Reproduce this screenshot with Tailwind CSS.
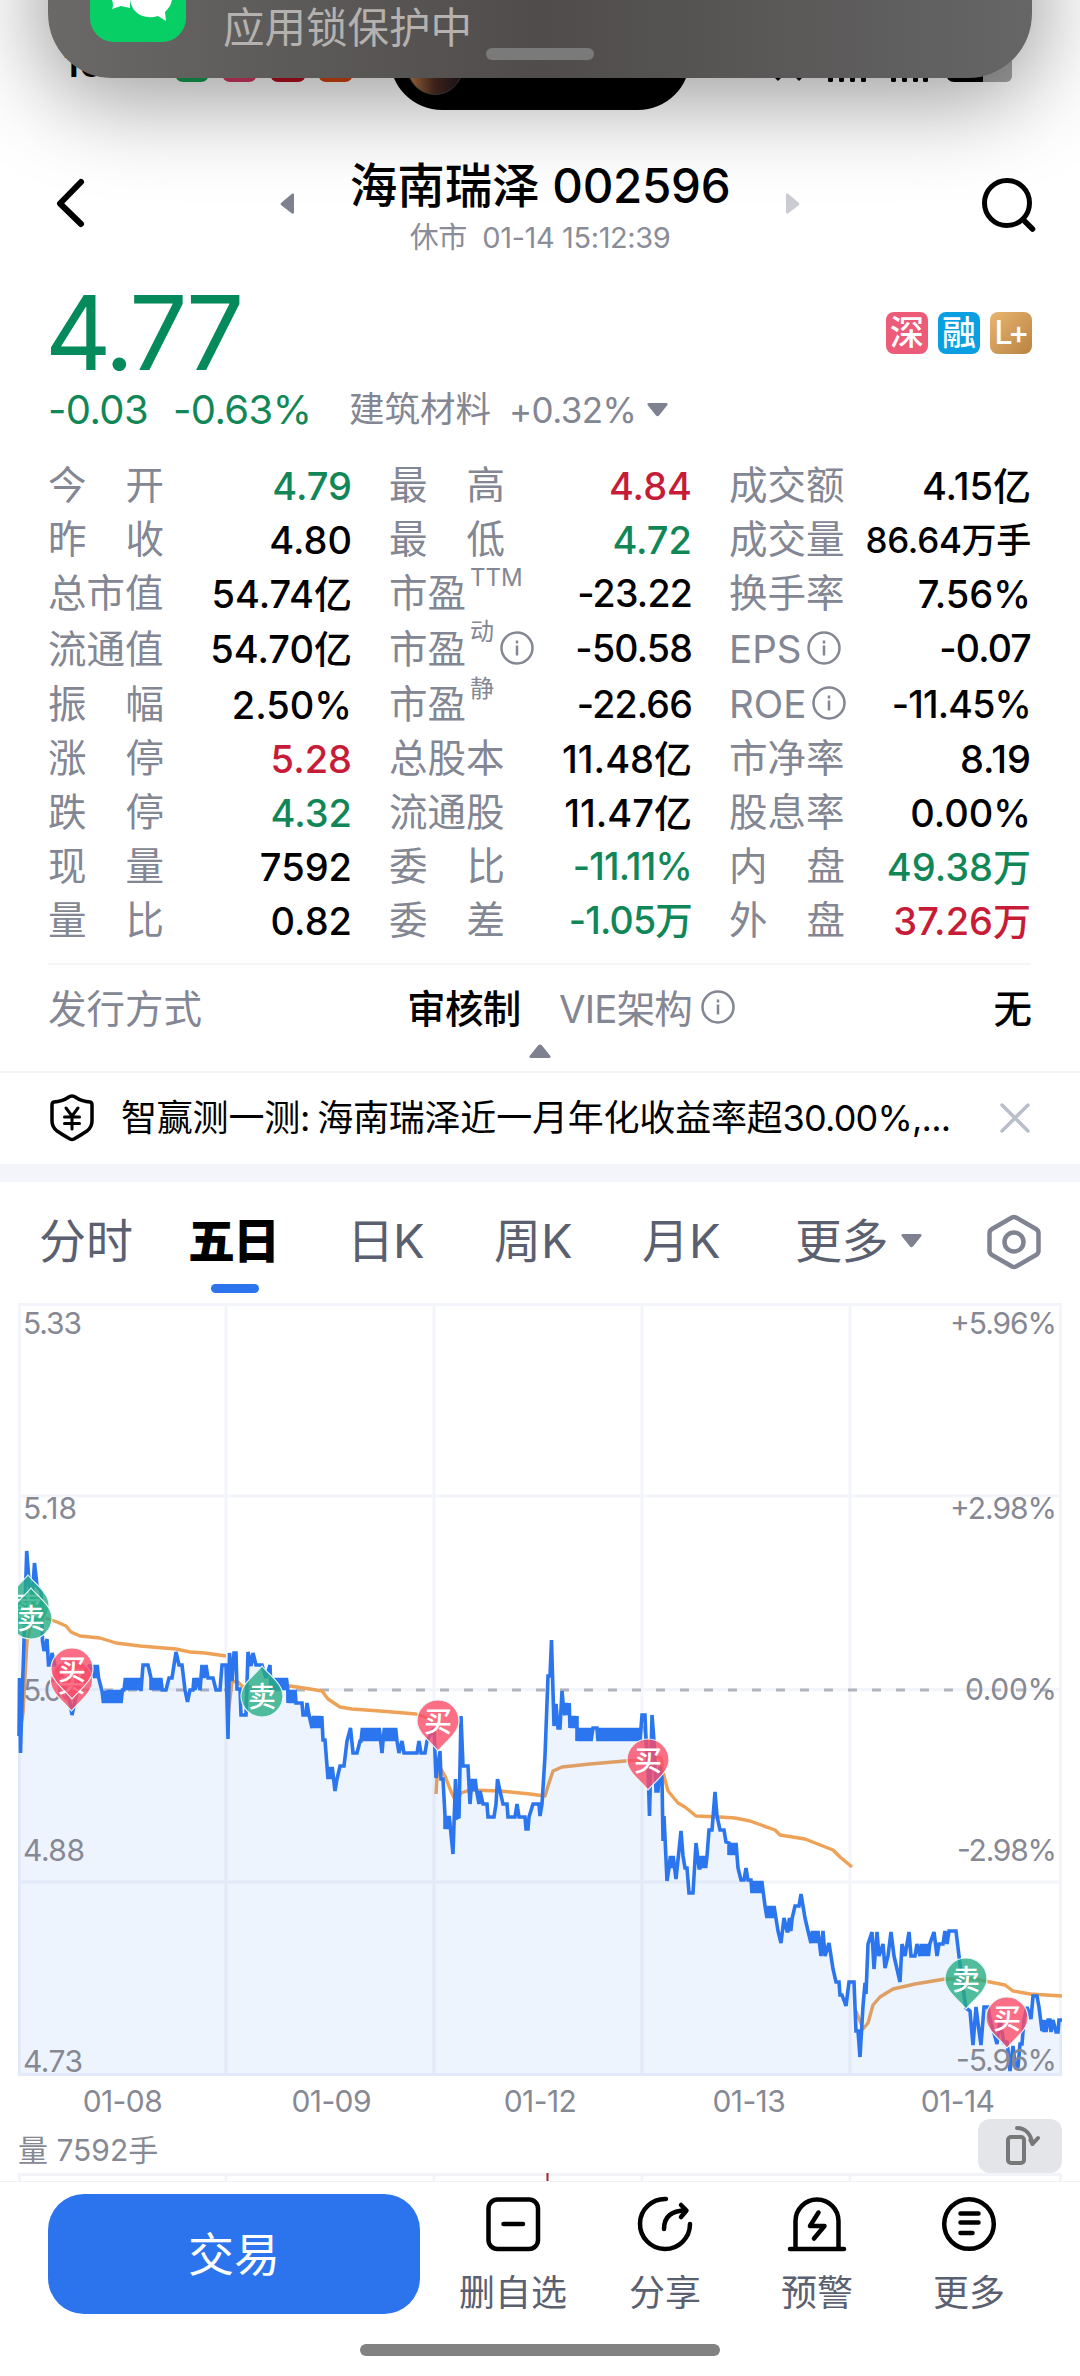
<!DOCTYPE html>
<html lang="zh-CN">

<head>
    <meta charset="UTF-8">
    <meta name="viewport" content="width=device-width, initial-scale=1.0">
    <title>海南瑞泽 002596</title>
    <script src="https://cdn.jsdelivr.net/npm/@tailwindcss/browser@4"></script>
</head>

<body class="bg-white">
    <div class="relative w-[1080px] h-[2376px] overflow-hidden bg-white flex flex-col font-['Inter','Noto_Sans_CJK_SC',sans-serif] text-black">

        <!-- Status bar -->
        <div class="h-[140px] shrink-0 flex items-start">
            <svg class="w-[1080px] h-[112px]" viewBox="0 0 1080 112">
                <text x="63" y="77" font-size="38" font-weight="600">16:20</text>
                <rect x="175" y="48" width="34" height="34" rx="8" fill="#14a150" />
                <rect x="222" y="48" width="35" height="34" rx="8" fill="#d33a66" />
                <rect x="270" y="48" width="36" height="34" rx="8" fill="#b30f1f" />
                <rect x="318" y="48" width="35" height="34" rx="8" fill="#d3460f" />
                <path d="M774 77h8l-4 4zM795 77h8l-4 4z" />
                <path d="M828 60h5v20.500a1.500 1.500 0 0 1-1.500 1.500h-2a1.500 1.500 0 0 1-1.500-1.500zM839 60h5v20.500a1.500 1.500 0 0 1-1.500 1.500h-2a1.500 1.500 0 0 1-1.500-1.500zM850 60h5v20.500a1.500 1.500 0 0 1-1.500 1.500h-2a1.500 1.500 0 0 1-1.500-1.500zM861 60h5v20.500a1.500 1.500 0 0 1-1.500 1.500h-2a1.500 1.500 0 0 1-1.500-1.500zM891 60h5v20.500a1.500 1.500 0 0 1-1.500 1.500h-2a1.500 1.500 0 0 1-1.500-1.500zM902 60h5v20.500a1.500 1.500 0 0 1-1.500 1.500h-2a1.500 1.500 0 0 1-1.500-1.500zM913 60h5v20.500a1.500 1.500 0 0 1-1.500 1.500h-2a1.500 1.500 0 0 1-1.500-1.500zM923 60h5v20.500a1.500 1.500 0 0 1-1.500 1.500h-2a1.500 1.500 0 0 1-1.500-1.500z" />
                <path d="M983 54h29v22a6 6 0 0 1-6 6h-23z" fill="#a5a5a5" />
                <path d="M946 54h37v28h-29a8 8 0 0 1-8-8z" />
            </svg>
        </div>

        <!-- Title bar -->
        <header class="h-[132px] shrink-0 flex items-center pl-[54px] pr-[42px]">
            <svg class="w-[34px] h-[52px] mt-[-4px]" viewBox="0 0 34 52" fill="none" stroke="#000" stroke-width="6" stroke-linecap="round" stroke-linejoin="round"><path d="M27 4L6 25.500L27 46" /></svg>
            <svg class="ml-[191px] w-[16px] h-[22px] mt-[-4px]" viewBox="0 0 16 22"><path d="M15 1.500v18c0 1-1 1.500-2 1L2 12q-1-1 0-2L13 .8c1-.8 2-.3 2 .7z" fill="#7e8290" /></svg>
            <div class="flex-1 flex flex-col items-center pt-[3px]">
                <h1 class="text-[47.500px] leading-[58px] font-medium whitespace-nowrap">海南瑞泽 <span class="tracking-[-0.3px]">002596</span></h1>
                <p class="mt-[3px] text-[29px] leading-[40px] text-[#8a8d98] whitespace-nowrap tracking-[-0.4px]">休市 &nbsp;01-14 15:12:39</p>
            </div>
            <svg class="mr-[180px] w-[16px] h-[22px] mt-[-4px]" viewBox="0 0 16 22"><path d="M1 1.500v18c0 1 1 1.500 2 1L14 12q1-1 0-2L3 .8C2 0 1 .5 1 1.500z" fill="#cbccd3" /></svg>
            <svg class="w-[57px] h-[56px] mt-[-2px]" viewBox="0 0 57 56" fill="none" stroke="#000" stroke-width="5"><circle cx="26" cy="26" r="22.500" /><path d="M42 42.500L51.500 52" stroke-width="5.500" stroke-linecap="round" /></svg>
        </header>

        <!-- Price -->
        <section class="h-[187px] shrink-0 px-[49px] pt-[11px]">
            <div class="flex justify-between items-center h-[100px]">
                <span class="ml-[-4px] text-[103px] leading-[100px] text-[#058a5c] tracking-[-3.5px]">4.77</span>
                <div class="flex gap-[10px] text-white mr-[-1px]">
                    <span class="w-[42px] h-[42px] rounded-lg bg-[#ec5b78] flex items-center justify-center text-[34px] leading-none font-medium">深</span>
                    <span class="w-[42px] h-[42px] rounded-lg bg-[#099fe0] flex items-center justify-center text-[34px] leading-none font-medium">融</span>
                    <span class="w-[42px] h-[42px] rounded-lg bg-gradient-to-br from-[#e9b66f] to-[#b98242] flex items-center justify-center text-[32px] leading-none font-medium tracking-[-2px]">L+</span>
                </div>
            </div>
            <div class="flex items-center h-[54px] whitespace-nowrap">
                <span class="w-[125px] ml-[-1px] text-[40px] text-[#118757] tracking-[-0.6px]">-0.03</span>
                <span class="w-[176px] text-[40px] text-[#118757] tracking-[-0.6px]">-0.63%</span>
                <span class="w-[160px] text-[35.500px] text-[#838693]">建筑材料</span>
                <span class="w-[138px] text-[35px] text-[#838693] tracking-[-0.6px]">+0.32%</span>
                <svg class="w-[21px] h-[14px]" viewBox="0 0 21 14"><path d="M2 0h17c2 0 2 1.500 1 2.500l-8 10q-1.500 1.500-3 0L1 2.500C0 1.500 0 0 2 0z" fill="#7e8290" /></svg>
            </div>
        </section>

        <!-- Quote table, filled by the script below -->
        <section id="quotes" class="shrink-0 ml-[48px] mr-[49px] grid grid-cols-[304px_303px_302px] gap-x-[37px] grid-rows-[54px_54px_54px_57px_54px_54px_54px_54px_54px] h-[506px] border-b-2 border-[#f5f5f7]"></section>

        <section class="shrink-0 h-[106px] mx-[48px] pt-[17px] flex flex-col items-center">
            <div class="w-full h-[56px] flex items-center text-[38.500px] whitespace-nowrap">
                <span class="w-[359px] text-[#838693]">发行方式</span>
                <span class="w-[152px] font-medium tracking-[-0.6px]">审核制</span>
                <span class="text-[#838693] tracking-[-0.8px]">VIE架构</span>
                <svg class="ml-[9px] mb-[6px] w-[34px] h-[34px]" viewBox="0 0 34 34" fill="none" stroke="#838693" stroke-width="2.500"><circle cx="17" cy="17" r="15.500" /><path d="M17 14.500v10M17 9.500v3" /></svg>
                <span class="ml-auto font-medium">无</span>
            </div>
            <svg class="mt-[6px] w-[22px] h-[14px]" viewBox="0 0 22 14"><path d="M2 14h18c2 0 2-1.500 1-2.500l-8-10q-2-2-4 0l-8 10C0 12.500 0 14 2 14z" fill="#7e8290" /></svg>
        </section>

        <!-- Tip -->
        <section class="shrink-0 h-[93px] border-t-2 border-[#f2f3f5] flex items-center pl-[49px] pr-[49px] pb-[2px]">
            <svg class="w-[46px] h-[50px]" viewBox="0 0 46 50" fill="none" stroke="#000" stroke-width="3.500" stroke-linejoin="round" stroke-linecap="round">
                <path d="M23 3q2 0 4 1.500q6 4 14 4.500q2 .5 2 3v16q0 6-5 10q-6 4-13 8q-2 1-4 0q-7-4-13-8q-5-4-5-10V12q0-2.500 2-3q8-.5 14-4.500Q21 3 23 3z" />
                <path d="M17 15l6 8l6-8M23 23v13M15.500 24h15M15.500 30.500h15" stroke-width="3" />
            </svg>
            <p class="ml-[26px] text-[36px] whitespace-nowrap tracking-[-0.2px]">智赢测一测:<span class="ml-[7px]">海南瑞泽近一月年化收益率超</span><span class="tracking-[-0.8px]">30.00%,...</span></p>
            <svg class="ml-auto w-[32px] h-[32px]" viewBox="0 0 32 32" stroke="#b9bfca" stroke-width="3.500" stroke-linecap="round"><path d="M3 3L29 29M29 3L3 29" /></svg>
        </section>
        <div class="shrink-0 h-[18px] bg-[#f4f5fa]"></div>

        <!-- Chart tabs -->
        <nav class="shrink-0 h-[114px] pl-[39px] pt-[30px] flex items-start text-[47px] leading-[58px] text-[#5b6070] whitespace-nowrap">
            <a class="w-[149px]">分时</a>
            <a class="w-[159px] flex flex-col text-black font-black tracking-[-2px]">五日<span class="mt-[14px] ml-[23px] w-[48px] h-[9px] rounded-full bg-[#2b74ee]"></span></a>
            <a class="w-[147px] tracking-[-1px]">日K</a>
            <a class="w-[148px]">周K</a>
            <a class="w-[153px]">月K</a>
            <a class="w-[191px] flex items-center tracking-[-0.5px]">更多<svg class="ml-[13px] w-[21px] h-[14px]" viewBox="0 0 21 14"><path d="M2 0h17c2 0 2 1.500 1 2.500l-8 10q-1.500 1.500-3 0L1 2.500C0 1.500 0 0 2 0z" fill="#7e8290" /></svg></a>
            <svg class="mt-[2px] w-[56px] h-[56px]" viewBox="0 0 56 56" fill="none" stroke="#808492" stroke-width="4.500" stroke-linejoin="round"><path d="M26 3.500q2-1 4 0l20 11.500q2.500 1.500 2.500 4v18q0 2.500-2.500 4l-20 11.500q-2 1-4 0L6 41q-2.500-1.500-2.500-4V19Q3.500 16.500 6 15z" /><circle cx="28" cy="28" r="9.500" /></svg>
        </nav>

        <!-- Five day chart -->
        <svg class="shrink-0 w-[1080px] h-[780px]" viewBox="0 1295 1080 780">
            <g stroke="#f3f5fa" stroke-width="3" fill="none">
                <path d="M18 1303.500H1062M18 1495H1062M18 1688.500H1062M18 1881H1062M18 2073.500H1062" />
                <path d="M19.500 1302V2075M226 1302V2075M434 1302V2075M642 1302V2075M850 1302V2075M1060.500 1302V2075" />
            </g>
            <path d="M80 1689H1055" stroke="#b1b4bd" stroke-width="3" stroke-dasharray="9 15" />
            <g fill="none" stroke="#eea257" stroke-width="3.400" stroke-linejoin="round">
                <polyline points="19,1735 23,1712 27,1640 30,1628 36,1619 46,1617 57,1621 66,1625 71,1631 80,1635 100,1637 116,1642 140,1645 176,1648 190,1651 205,1652 226,1655" />
                <polyline points="228,1715 232,1680 238,1681 243,1686 290,1685 310,1688 322,1690 328,1698 340,1706 352,1708 380,1710 416,1713 431,1718" />
                <polyline points="436,1793 437,1777 441,1768 445,1775 450,1788 454,1797 457,1800 461,1792 470,1789 500,1790 530,1793 545,1795 548,1785 553,1770 562,1766 590,1763 625,1760 642,1759" />
                <polyline points="644,1725 650,1755 661,1757 664,1775 668,1790 678,1802 685,1806 696,1815 720,1816 735,1817 750,1820 775,1829 780,1834 805,1838 833,1849 840,1856 852,1866" />
                <polyline points="856,2010 863,2028 868,2022 873,2004 880,1996 893,1988 915,1983 945,1978 975,1978 1005,1984 1013,1990 1030,1993 1062,1995" />
            </g>
            <polygon id="area" fill="#2b80f4" fill-opacity="0.085" />
            <polyline id="line" fill="none" stroke="#2b76ee" stroke-width="3.600" stroke-linejoin="miter" stroke-miterlimit="2" />
            <g font-size="30" fill="#868994">
                <text x="23" y="1333" textLength="59">5.33</text>
                <text x="23" y="1518" textLength="54">5.18</text>
                <text x="23" y="1700" textLength="56">5.03</text>
                <text x="23" y="1860" textLength="62">4.88</text>
                <text x="23" y="2071" textLength="60">4.73</text>
                <text x="950" y="1333" textLength="107">+5.96%</text>
                <text x="950" y="1518" textLength="107">+2.98%</text>
                <text x="965" y="1699" textLength="92">0.00%</text>
                <text x="957" y="1860" textLength="100">-2.98%</text>
                <text x="956" y="2070" textLength="101">-5.96%</text>
            </g>
            <clipPath id="plot"><rect x="18" y="1302" width="1044" height="774" /></clipPath>
            <g id="pins" clip-path="url(#plot)" font-size="28" font-weight="500" fill="#fff" text-anchor="middle"></g>
        </svg>

        <div class="shrink-0 h-[51px] mx-[18px] grid grid-cols-5 items-center text-[30px] text-[#868994] text-center tracking-[-0.6px]">
            <span>01-08</span><span>01-09</span><span>01-12</span><span>01-13</span><span>01-14</span>
        </div>

        <div class="shrink-0 h-[46px] mx-[18px] flex items-center justify-between text-[30px] text-[#868994]">
            <span>量 7592手</span>
            <span class="w-[84px] h-[54px] mt-[-8px] rounded-xl bg-[#e4e5e9] flex items-center justify-center">
                <svg class="w-[40px] h-[42px]" viewBox="0 0 40 42" fill="none" stroke="#777" stroke-width="4" stroke-linecap="round" stroke-linejoin="round"><rect x="8" y="12" width="16" height="26" rx="3" /><path d="M17 3C26 3 31 10 32.500 19M32.500 19L38 13M32.500 19L30.500 15" /></svg>
            </span>
        </div>
        <svg class="shrink-0 w-[1080px] h-[9px]" viewBox="0 2172 1080 9">
            <path d="M18 2173.500H1062M19.500 2172V2181M226 2172V2181M434 2172V2181M642 2172V2181M850 2172V2181M1060.500 2172V2181" stroke="#f3f4f9" stroke-width="3" />
            <path d="M547.500 2172V2180" stroke="#a02632" stroke-width="2" />
            <path d="M0 2180.500H1080" stroke="#f1f1f3" />
        </svg>

        <!-- Bottom bar -->
        <footer class="shrink-0 h-[195px] flex flex-col items-center">
            <div class="w-full h-[162px] pl-[48px] pt-[12px] flex items-start">
                <button class="w-[372px] h-[120px] mr-[17px] rounded-[36px] bg-[#2b74ee] text-white text-[46px]">交易</button>
                <a class="w-[152px] flex flex-col items-center text-[36px] leading-[44px] text-[#5b6070]">
                    <svg class="mb-[17px] w-[60px] h-[60px]" viewBox="0 0 60 60" fill="none" stroke="#000" stroke-width="4.500" stroke-linecap="round"><rect x="5.500" y="5.500" width="49.500" height="49.500" rx="9" /><path d="M20.500 30h19.500" /></svg>删自选
                </a>
                <a class="w-[152px] flex flex-col items-center text-[36px] leading-[44px] text-[#5b6070]">
                    <svg class="mb-[17px] w-[60px] h-[60px]" viewBox="0 0 60 60" fill="none" stroke="#000" stroke-width="4.500" stroke-linecap="round" stroke-linejoin="round"><path d="M31 5A25 25 0 1 0 55 30M29 35C29 23 36 16.500 51 16.500M46 11L51.500 16.500L46 23" /></svg>分享
                </a>
                <a class="w-[152px] flex flex-col items-center text-[36px] leading-[44px] text-[#5b6070]">
                    <svg class="mb-[17px] w-[60px] h-[60px]" viewBox="0 0 60 60" fill="none" stroke="#000" stroke-width="4.500" stroke-linecap="round" stroke-linejoin="round"><path d="M8.500 54V27a21.500 21.500 0 0 1 43 0v27M3 55h54M31.500 18.500L23 32h14.500L27 44.500" /></svg>预警
                </a>
                <a class="w-[152px] flex flex-col items-center text-[36px] leading-[44px] text-[#5b6070]">
                    <svg class="mb-[17px] w-[60px] h-[60px]" viewBox="0 0 60 60" fill="none" stroke="#000" stroke-width="4.500" stroke-linecap="round"><circle cx="30" cy="30" r="24.800" /><path d="M21.500 19.500h18M21.500 28.500h18M21.500 39h12" /></svg>更多
                </a>
            </div>
            <div class="w-[360px] h-[12px] rounded-full bg-[#828282]"></div>
        </footer>

        <!-- Notification banner over the status bar -->
        <div class="absolute left-[390px] top-[-10px] w-[300px] h-[120px] rounded-[52px] bg-black z-20">
            <div class="ml-[17px] mt-[49px] w-[56px] h-[56px] rounded-full bg-gradient-to-r from-[#97643a] via-[#3b2118] to-[#191016] border border-[#333]"></div>
        </div>
        <div class="absolute left-[48px] top-[-100px] w-[984px] h-[178px] rounded-[64px] shadow-[0_14px_90px_10px_rgba(0,0,0,0.38)] z-10"></div>
        <div class="absolute left-[48px] top-[-100px] w-[984px] h-[178px] rounded-[64px] bg-gradient-to-r from-[#6a6967] via-[#4f4c4b] to-[#666666] z-30 overflow-hidden">
            <div class="flex items-start pl-[42px] pt-[46px]">
                <svg class="w-[96px] h-[96px]" viewBox="0 0 96 96">
                    <rect width="96" height="96" rx="24" fill="#08cf65" />
                    <path d="M22 54q2 6 0 9l9-3l9 2V40H20zM61 34c13 0 21 8 21 18 0 6-3 10-7 14l1 9-8-5c-17 5-28-6-28-18 0-10 9-18 21-18z" fill="#fff" />
                </svg>
                <span class="ml-[37px] mt-[52px] text-[41.500px] leading-[60px] text-[#b4b1af]">应用锁保护中</span>
            </div>
            <div class="absolute left-[438px] top-[148px] w-[108px] h-[12px] rounded-full bg-[#7b7a7a]"></div>
        </div>
    </div>

    <script>
        // label, value, colour of the value, superscript, info icon
        const quotes = [
            ['今开', '4.79', 'g'], ['最高', '4.84', 'r'], ['成交额', '4.15亿'],
            ['昨收', '4.80'], ['最低', '4.72', 'g'], ['成交量', '86.64万手'],
            ['总市值', '54.74亿'], ['市盈', '-23.22', '', 'TTM'], ['换手率', '7.56%'],
            ['流通值', '54.70亿'], ['市盈', '-50.58', '', '动', true], ['EPS', '-0.07', '', '', true],
            ['振幅', '2.50%'], ['市盈', '-22.66', '', '静'], ['ROE', '-11.45%', '', '', true],
            ['涨停', '5.28', 'r'], ['总股本', '11.48亿'], ['市净率', '8.19'],
            ['跌停', '4.32', 'g'], ['流通股', '11.47亿'], ['股息率', '0.00%'],
            ['现量', '7592'], ['委比', '-11.11%', 'g'], ['内盘', '49.38万', 'g'],
            ['量比', '0.82'], ['委差', '-1.05万', 'g'], ['外盘', '37.26万', 'r']
        ];
        const colors = { g: 'text-[#118757]', r: 'text-[#c71c37]' };
        const info = '<svg class="ml-[6px] mb-[4px] w-[34px] h-[34px]" viewBox="0 0 34 34" fill="none" stroke="#838693" stroke-width="2.500"><circle cx="17" cy="17" r="15.500" /><path d="M17 14.500v10M17 9.500v3" /></svg>';

        const size = value => {
            if (value.length > 6 && value.endsWith('手')) return 'text-[35px] tracking-[-0.3px]';
            if (value[0] === '-') return 'text-[37.500px] tracking-[-0.8px]';
            return 'text-[38px]';
        };

        document.getElementById('quotes').innerHTML = quotes.map(([label, value, color, sup, icon]) => {
            let name = `<span>${label}</span>`;
            if (label.length === 2 && !sup) {
                name = `<span class="w-[116px] flex justify-between"><span>${label[0]}</span><span>${label[1]}</span></span>`;
            }
            if (sup) {
                name += `<span class="self-start ml-[4px] mt-[-4px] text-[24px] leading-[30px]">${sup}</span>`;
            }
            return `<div class="flex items-center justify-between whitespace-nowrap">
                <div class="h-full flex items-center text-[38.500px] text-[#838693]">${name}${icon ? info : ''}</div>
                <span class="font-medium ${size(value)} ${colors[color] || 'text-black'}">${value}</span>
            </div>`;
        }).join('');

        // z = [x1, x2, high, low]: the price flips between two ticks there
        const z = (x1, x2, a, b) => {
            const out = [];
            for (let x = x1, i = 0; x <= x2; x += 1.4, i++) out.push(x.toFixed(1) + ',' + (i % 2 ? a : b));
            return out.join(' ');
        };
        const price = [
            '19,1735 19.500,1677 20.500,1752 22,1700 24,1640 26.700,1550 29,1580 32,1600 34.500,1562 37,1585 41,1590 42.500,1640 44,1650 47,1638 48.500,1664 51,1664 52,1652 55,1664 62,1677 66,1690 70,1702 72,1714 75,1700 80,1677 90,1664',
            z(93, 100, 1664, 1677), '102,1690 103.500,1702 105,1690', z(107, 123, 1689, 1702), z(124, 140, 1677, 1689), '141,1690 143,1664 148,1664 151,1677', z(151, 163, 1677, 1689),
            '166,1689 169,1677 172,1677 174,1664 176,1651 179,1664 182,1664 185,1689 187.500,1701 190,1689 193,1689 194,1677 195,1689 197,1677 200,1689 202,1664 204,1677 206,1664 208,1677 213,1677 216,1689 220,1689 222,1664 226,1664 227,1700 228,1738 229.500,1652 232,1680 234,1652 236,1652 237,1688 240,1688 241,1714 246,1714 248,1651 251,1665 253,1652 256,1664 262,1664 266,1677 270,1664',
            z(271, 288, 1677, 1689), z(288, 295, 1689, 1702), '296,1702 302,1702 303,1714 306,1714 307,1702 309,1714', z(312, 322, 1715, 1727), '323,1739 325,1739 327,1765', z(328, 333, 1766, 1778),
            '335,1790 337,1778 340,1765 344,1765 347,1740 350.500,1727 353,1752 357,1752 360,1740', z(361, 380, 1727, 1740), '382,1752', z(383, 398, 1727, 1740),
            '399,1752 402,1740 404,1752 408,1752 417,1752 419,1740 421,1752 425,1752 427,1740 434,1727 436,1777 440,1750 441,1778 443,1778 445,1815', z(445, 450, 1815, 1828),
            '453,1853 455.500,1778 457,1817 459,1816 461,1715 463,1765 468,1765 470,1803', z(471, 477, 1778, 1790), '479,1803 480,1790 483,1803 487,1803 488,1816 494,1816 496,1803 497.500,1778 500,1790 503,1803 507,1803 508,1816 515,1816 517,1803 519,1816 525,1816 526,1828 528,1828 529,1816 533,1803 539,1803 540,1815 542,1803 545,1755 548,1675 550,1675 551.500,1639 554,1725 556,1703 558,1727 560,1727 562,1690 564,1712',
            z(565, 570, 1702, 1714), z(570, 577, 1715, 1727), z(577, 591, 1727, 1740), '593,1727 597,1727 598,1740', z(598, 640, 1727, 1740),
            '642,1714 645,1714 646,1740 648,1765 649.500,1815 652,1714 654,1740 656,1790 658,1790 660,1765 662,1777 663,1840 664,1815 667,1880', z(669, 675, 1855, 1867),
            '676,1878 681,1830 683,1855 685,1867 687,1867 689,1892 693,1892 696,1842 699,1867', z(700, 707, 1855, 1867), '709,1829 712,1829 715,1791 717,1815 720,1829 724,1829 726,1841 729,1842', z(729, 736, 1842, 1854),
            '738,1867 741,1879 744,1879 746,1867 748,1879 751,1879', z(752, 762, 1880, 1892), '765,1905', z(767, 775, 1905, 1917), '778,1930 781,1942 784,1917 787,1930', z(788, 793, 1917, 1930),
            '795,1905 799,1905 801,1893 803,1905 805,1917 808,1930', z(811, 819, 1930, 1942), '821,1955 823,1930 825,1955 829,1942 831,1955 833,1968 836,1981 839,1981 840,1994 842,1994 846,2005 849,1981 854,1981 856,2030 858,2030 860,2056 863,2005 865,1982 866,1993 868,1943 872,1931 874,1968 877,1931 879,1955 883,1943 885,1967 888,1955 891,1931 894,1955 897,1968 900,1981 902,1943 905,1955 909,1931 911,1955 915,1955 917,1943',
            z(920, 930, 1943, 1955), '934,1931 937,1955 939,1943 943,1943 945,1930 947,1943 949,1930 956,1930 959,1955 962,1980 966,2007 970,2010 973,2044 976,2006 979,2030 981,2044 984,2006 988,2006 990,2018 997,2043 1000,2018 1004,2043 1007,2040 1010,2070 1013,2045 1016,2068 1018,2066 1020,2043 1022,2043 1024,2018 1027,2006 1031,2018 1033,1995 1037,1995 1039,2006 1042,2030',
            '1043,2019 1044,2031 1045.500,2019 1046,2031 1048,2019 1050,2019 1051,2031 1053,2019 1056,2031 1058,2031 1059,2019 1062,2019'
        ].join(' ');
        document.getElementById('line').setAttribute('points', price);
        document.getElementById('area').setAttribute('points', `18,2075 18,1735 ${price} 1062,2075`);

        // x, y of the pin's head, text, colour, tip pointing up
        const pins = [
            [28, 1604, '卖', '#27ad84', true], [31, 1617, '卖', '#27ad84', true], [71.500, 1680, '买', '#fa4b68'], [72, 1668, '买', '#fa4b68'],
            [262, 1695, '卖', '#27ad84', true], [438, 1720, '买', '#fa4b68'], [648, 1759, '买', '#fa4b68'],
            [966, 1978, '卖', '#27ad84'], [1007, 2017, '买', '#fa4b68']
        ];
        document.getElementById('pins').innerHTML = pins.map(([x, y, t, color, up]) => `
            <g transform="translate(${x} ${y})">
                <path transform="${up ? 'scale(1 -1)' : ''}" d="M0 30C-7 21-21 12-21 0A21 21 0 0 1 21 0C21 12 7 21 0 30z" fill="${color}" fill-opacity="0.8" stroke="#e8f6f6" stroke-width="1.200" />
                <text y="11">${t}</text>
            </g>`).join('');
    </script>
</body>

</html>
